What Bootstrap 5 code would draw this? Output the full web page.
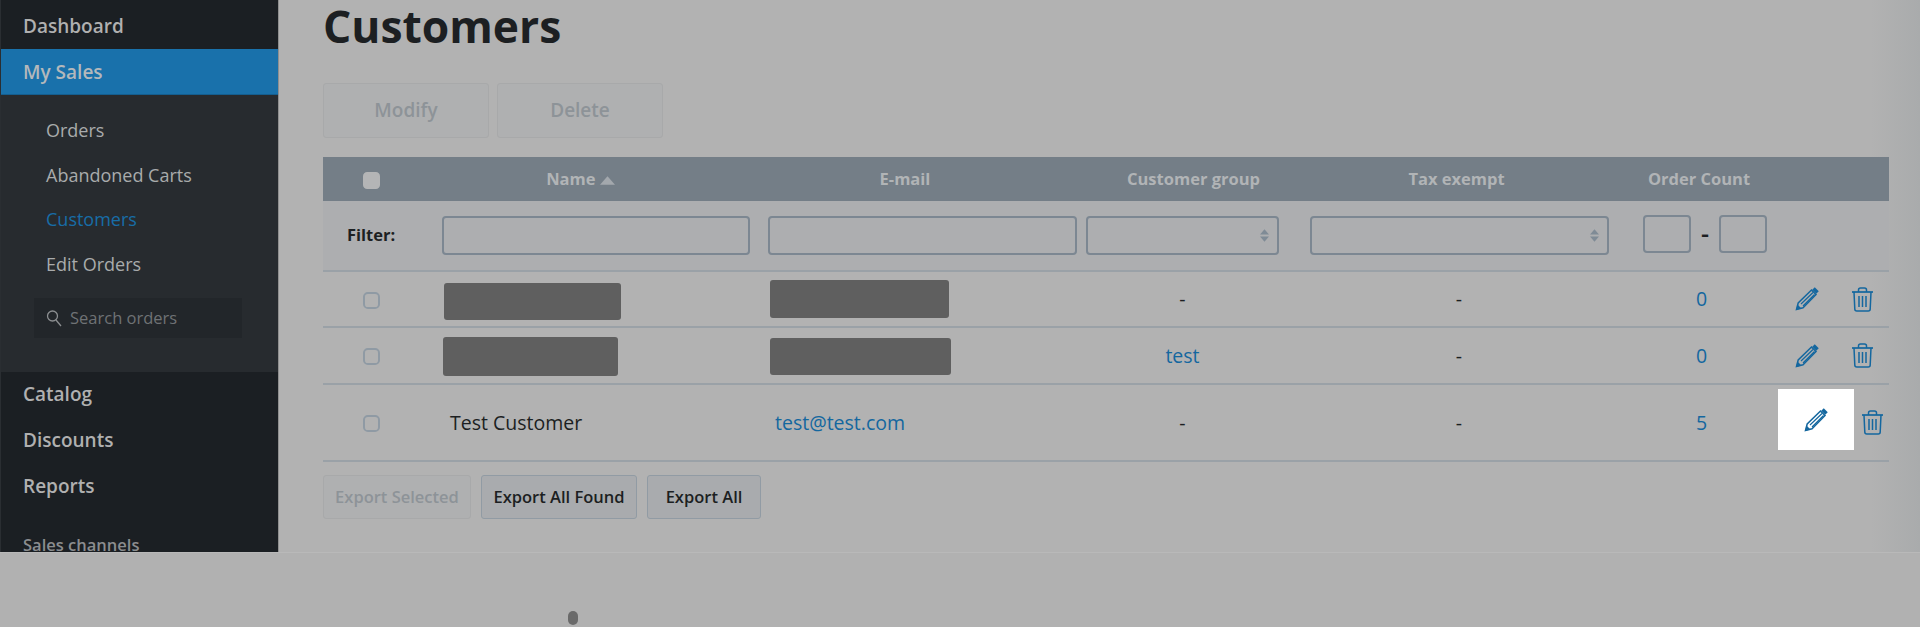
<!DOCTYPE html>
<html lang="en"><head><meta charset="utf-8"><title>Customers</title>
<link href="https://cdn.jsdelivr.net/npm/bootstrap@5.3.0/dist/css/bootstrap.min.css" rel="stylesheet">
<style>
html,body{height:627px;overflow:hidden}
body{background:#b1b1b1;font-family:"Open Sans","Liberation Sans",sans-serif;color:#1c1f22}
.app-shell{height:553px;overflow:hidden;border-bottom:1px solid #b9b9b9}
.side-panel{width:279px;flex:none;background:#1b1f23;border-left:1px solid #2a2e32;border-right:1px solid #8f8f8f;overflow:hidden}
.side-top{display:block;padding:0 22px;font-weight:600;font-size:19px;color:#b0b0b0;text-decoration:none;height:46px;line-height:46px}
.side-dash{height:49px;line-height:52px}
.side-active{background:#1971ab;color:#b4b8bb;height:46px;line-height:46px;border-bottom:1px solid #145e8f}
.side-sub{background:#272b2f;padding:13px 0 32px;height:277px;margin-bottom:0}
.side-sub a{display:block;padding:0 45px;height:44.500px;line-height:44px;font-size:18px;color:#a9abac;text-decoration:none}
.side-sub a.on{color:#176da7}
.side-search{margin:12px 0 0 33px;width:208px;height:40px;background:#22262a;display:flex;align-items:center;padding-left:12px;gap:8px;color:#6f7275;font-size:16.5px}
.side-cat{margin-top:0;height:46px;line-height:45px}
.side-label{padding:23px 22px 0;color:#8b8d8f;font-size:16.5px;font-weight:600}
.main-pane{flex:1;padding:0 31px 0 44px;min-width:0;background:linear-gradient(90deg,#b2b2b2 97%,#a9abac)}
.page-title{font-size:44.4px;font-weight:700;line-height:52px;margin:0 0 31px;color:#1c1f22}
.top-btn,.top-btn:disabled{width:166px;height:55px;font-size:19px;font-weight:600;background:#afb0b1;border:1px solid #a8a9aa;color:#8d9398;opacity:1;border-radius:3px}
.top-row{gap:8px;margin-bottom:19px}
.cust-table{table-layout:fixed;width:1566px;margin:0;--bs-table-bg:transparent;border-color:#98a1a9;color:#1c1f22}
.cust-table th{background:#747e87;color:#b1b4b6;height:44px;padding:0;text-align:center;font-size:16.5px;font-weight:700;vertical-align:middle;border:0}
.cust-table td{padding:0;text-align:center;vertical-align:middle;font-size:19.5px;border-bottom:2px solid #9aa1a7}
.cust-table a{color:#14679f;text-decoration:none}
.cust-table tr>:first-child{padding-right:16px}
.th-name{padding-right:34px!important}
.th-mail{padding-right:32px!important}
.th-group{padding-left:15px!important}
.th-right{padding-right:2px!important}
.td-group{padding-right:7px!important}
.td-right{padding-left:3px!important}
.filter-row td{background:#adaeb0;height:70px;font-size:16.5px;font-weight:700}
.filter-row .cell-name{padding:0 10px 0 7px}
.filter-row .cell-mail{padding:0 5px 0 8px}
.filter-row .cell-group{padding:0 11px 0 4px}
.filter-row .cell-tax{padding:0 16px 0 20px}
.flt{height:39px;background-color:transparent;border:2px solid #7c8792;border-radius:4px;box-shadow:none}
select.flt{background-image:url("data:image/svg+xml,%3Csvg xmlns='http://www.w3.org/2000/svg' viewBox='0 0 10 14'%3E%3Cpath fill='%237f8b96' d='M5 0l5 6H0zM5 14L0 8h10z'/%3E%3C/svg%3E");background-size:9px 13px;background-position:right 8px center}
.flt-num{width:48px;height:38px}
.count-wrap{display:flex;align-items:center;gap:9px;padding-left:18px;margin-top:-4px}
.count-wrap span{font-size:25px;font-weight:600;width:10px;line-height:1}
.row-a td{height:56px}.row-b td{height:57px}.row-c td{height:77px}
.mask-box{display:block;background:#5f5f5f;border-radius:3px}
.mask-a{width:177px;height:37px;margin:4px 0 0 9px}
.mask-b{width:175px;height:39px;margin:1px 0 0 8px}
.mask-c{width:179px;height:38px;margin-left:10px}
.mask-d{width:181px;height:37px;margin:2px 0 0 10px}
.box-check{display:block;width:17px;height:17px;margin:2px auto 0;background-color:transparent;border:2px solid #8f9aa4;border-radius:4px;box-shadow:none}
.box-head{background-color:#b4b5b6;border-color:#b4b5b6}
.tleft{text-align:left!important}
.name-txt{padding-left:15px!important}
.mail-txt{padding-left:15px!important}
.act-wrap{display:flex;align-items:center;padding-left:20px;gap:33px}
.act-wrap svg{flex:none}
.act-hi{position:relative;height:61px}
.hi-box{position:absolute;left:3px;top:-3px;width:76px;height:61px;background:#fff;display:flex;align-items:center;justify-content:center}
.act-trash{margin-left:87px}
.exp-row{gap:10px;margin-top:13px}
.exp-btn,.exp-btn:disabled{height:44px;font-size:16.5px;font-weight:600;border-radius:3px;background:#a9abae;border:1px solid #919ba4;color:#1c1f22;padding:0;opacity:1}
.exp-off,.exp-off:disabled{width:148px;background:#afb0b1;border-color:#a8a9aa;color:#8d9398}
.exp-all{width:156px}.exp-allb{width:114px}
.foot-strip{height:73px;padding:58px 0 0 568px}
.foot-dot{display:block;width:10px;height:14px;background:#6a6a6a;border-radius:5px}
</style></head><body>
<svg width="0" height="0" class="position-absolute"><defs>
<symbol id="pen" viewBox="0 0 24 24"><g fill="none" stroke="#14679f"><path stroke-width="1.500" d="M1.500 22.500l1.700-6.500L16.500 3l4.500 4.500L8 20.800z"/><path stroke-width="1.200" d="M6 17L18 5.500M8 19L19.500 7.500"/><path stroke-width="3.600" d="M18.500 1.500l4 4"/></g><path fill="#14679f" d="M1 23l1.500-5.500 4 4z"/></symbol>
<symbol id="bin" viewBox="0 0 21 25"><g fill="none" stroke="#14679f" stroke-width="1.500"><path d="M0 5h21" stroke-width="1.700"/><path d="M6.500 5V3a2 2 0 0 1 2-2h4a2 2 0 0 1 2 2v2"/><path d="M2 5l.8 17a2 2 0 0 0 2 2h11.400a2 2 0 0 0 2-2L19 5"/><path d="M7 9v11M10.500 9v11M14 9v11"/></g></symbol>
</defs></svg>
<div class="app-shell d-flex">
<nav class="side-panel">
<a class="side-top side-dash" href="#">Dashboard</a>
<a class="side-top side-active" href="#">My Sales</a>
<div class="side-sub">
<a href="#">Orders</a><a href="#">Abandoned Carts</a><a class="on" href="#">Customers</a><a href="#">Edit Orders</a>
<div class="side-search"><svg width="16" height="18" viewBox="0 0 16 18" fill="none" stroke="#8b8e90" stroke-width="1.3"><circle cx="6.500" cy="7" r="5"/><path d="M10 11l5 6"/></svg><span>Search orders</span></div>
</div>
<a class="side-top side-cat" href="#">Catalog</a><a class="side-top side-cat" href="#">Discounts</a><a class="side-top side-cat" href="#">Reports</a>
<div class="side-label">Sales channels</div>
</nav>
<main class="main-pane">
<h1 class="page-title">Customers</h1>
<div class="d-flex top-row"><button class="btn top-btn" disabled>Modify</button><button class="btn top-btn" disabled>Delete</button></div>
<table class="table cust-table">
<colgroup><col style="width:112px"><col style="width:325px"><col style="width:322px"><col style="width:208px"><col style="width:335px"><col style="width:150px"><col style="width:114px"></colgroup>
<thead><tr><th><input class="form-check-input box-check box-head" type="checkbox"></th><th class="th-name">Name <svg width="15" height="9" viewBox="0 0 14 8"><path fill="#a3a8ad" d="M7 0l7 8H0z"/></svg></th><th class="th-mail">E-mail</th><th class="th-group">Customer group</th><th class="th-right">Tax exempt</th><th class="th-right">Order Count</th><th></th></tr></thead>
<tbody>
<tr class="filter-row"><td>Filter:</td><td class="cell-name"><input class="form-control flt"></td><td class="cell-mail"><input class="form-control flt"></td><td class="cell-group"><select class="form-select flt"></select></td><td class="cell-tax"><select class="form-select flt"></select></td><td><div class="count-wrap"><input class="form-control flt flt-num"><span>-</span><input class="form-control flt flt-num"></div></td><td></td></tr>
<tr class="row-a"><td><input class="form-check-input box-check" type="checkbox"></td><td class="tleft"><span class="mask-box mask-a"></span></td><td class="tleft"><span class="mask-box mask-c"></span></td><td class="td-group">-</td><td class="td-right">-</td><td class="td-right"><a href="#">0</a></td><td><div class="act-wrap"><svg width="24" height="24"><use href="#pen"/></svg><svg width="21" height="25"><use href="#bin"/></svg></div></td></tr>
<tr class="row-b"><td><input class="form-check-input box-check" type="checkbox"></td><td class="tleft"><span class="mask-box mask-b"></span></td><td class="tleft"><span class="mask-box mask-d"></span></td><td class="td-group"><a href="#">test</a></td><td class="td-right">-</td><td class="td-right"><a href="#">0</a></td><td><div class="act-wrap"><svg width="24" height="24"><use href="#pen"/></svg><svg width="21" height="25"><use href="#bin"/></svg></div></td></tr>
<tr class="row-c"><td><input class="form-check-input box-check" type="checkbox"></td><td class="tleft name-txt">Test Customer</td><td class="tleft mail-txt"><a href="#">test@test.com</a></td><td class="td-group">-</td><td class="td-right">-</td><td class="td-right"><a href="#">5</a></td><td><div class="act-hi"><div class="hi-box"><svg width="24" height="24"><use href="#pen"/></svg></div><div class="d-flex align-items-center h-100 act-trash"><svg width="21" height="25"><use href="#bin"/></svg></div></div></td></tr>
</tbody></table>
<div class="d-flex exp-row"><button class="btn exp-btn exp-off" disabled>Export Selected</button><button class="btn exp-btn exp-all">Export All Found</button><button class="btn exp-btn exp-allb">Export All</button></div>
</main>
</div>
<div class="foot-strip"><span class="foot-dot"></span></div>
</body></html>
